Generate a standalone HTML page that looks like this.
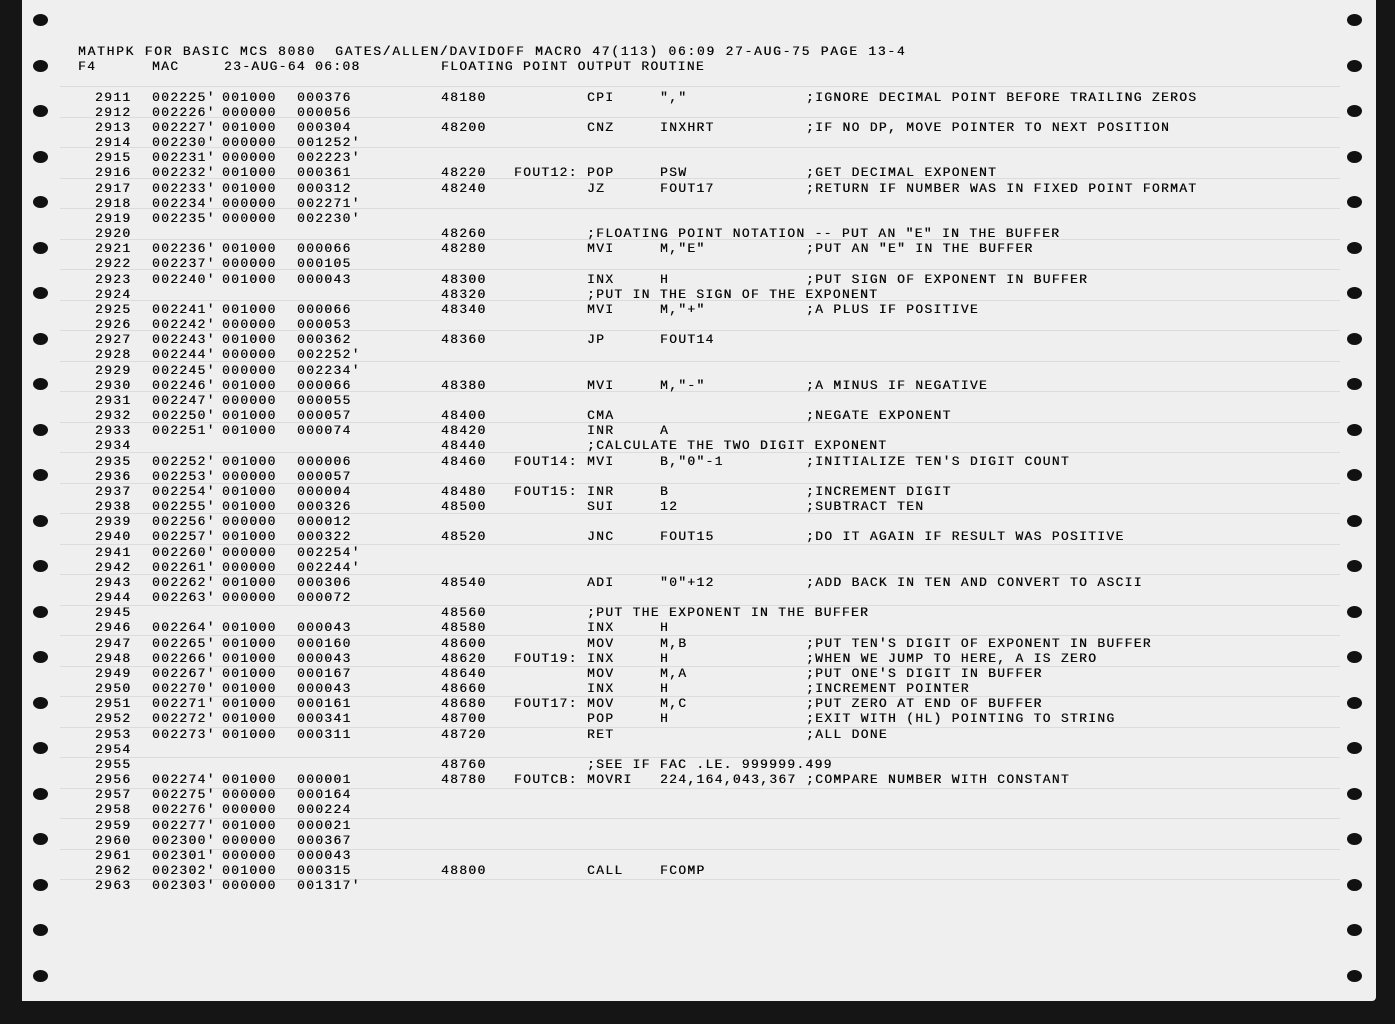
<!DOCTYPE html>
<html><head><meta charset="utf-8"><style>
html,body{margin:0;padding:0;background:#151515;}
#wrap{position:relative;width:1395px;height:1024px;overflow:hidden;background:#151515;}
#paper{position:absolute;left:22px;top:0;width:1354px;height:1001px;background:#efefef;border-radius:0 0 4px 0;}
.hole{position:absolute;width:15px;height:12px;border-radius:50%;background:#111;}
.rule{position:absolute;left:60px;width:1280px;height:1px;background:#dcdcdc;}
.t{position:absolute;font-family:"Liberation Mono",monospace;font-size:13px;letter-spacing:1.3px;color:#0a0a0a;white-space:pre;line-height:15px;text-shadow:0.3px 0 0 #0a0a0a;}
.h{letter-spacing:1.72px;}
</style></head><body><div id="wrap"><div id="paper"></div>
</div>
<script>
var w=document.getElementById('wrap');
function add(h){w.insertAdjacentHTML('beforeend',h);}
for(var k=0;k<22;k++){var y=20+45.5*k;add('<div class="hole" style="left:33px;top:'+(y-6)+'px"></div><div class="hole" style="left:1347px;top:'+(y-6)+'px"></div>');}
for(var k=0;k<27;k++){add('<div class="rule" style="top:'+(86+30.5*k)+'px"></div>');}
function t(x,y,s,c){add('<div class="t'+(c?' h':'')+'" style="left:'+x+'px;top:'+(y-7.5)+'px">'+s+'</div>');}
t(78,51,"MATHPK FOR BASIC MCS 8080  GATES/ALLEN/DAVIDOFF MACRO 47(113) 06:09 27-AUG-75 PAGE 13-4",1);
t(78,66,"F4");t(152,66,"MAC");t(224,66,"23-AUG-64 06:08");t(441,66,"FLOATING POINT OUTPUT ROUTINE");
var R=[
["2911","002225'","001000","000376","48180","","CPI","\",\"",";IGNORE DECIMAL POINT BEFORE TRAILING ZEROS"],
["2912","002226'","000000","000056"],
["2913","002227'","001000","000304","48200","","CNZ","INXHRT",";IF NO DP, MOVE POINTER TO NEXT POSITION"],
["2914","002230'","000000","001252'"],
["2915","002231'","000000","002223'"],
["2916","002232'","001000","000361","48220","FOUT12:","POP","PSW",";GET DECIMAL EXPONENT"],
["2917","002233'","001000","000312","48240","","JZ","FOUT17",";RETURN IF NUMBER WAS IN FIXED POINT FORMAT"],
["2918","002234'","000000","002271'"],
["2919","002235'","000000","002230'"],
["2920","","","","48260","",";FLOATING POINT NOTATION -- PUT AN \"E\" IN THE BUFFER"],
["2921","002236'","001000","000066","48280","","MVI","M,\"E\"",";PUT AN \"E\" IN THE BUFFER"],
["2922","002237'","000000","000105"],
["2923","002240'","001000","000043","48300","","INX","H",";PUT SIGN OF EXPONENT IN BUFFER"],
["2924","","","","48320","",";PUT IN THE SIGN OF THE EXPONENT"],
["2925","002241'","001000","000066","48340","","MVI","M,\"+\"",";A PLUS IF POSITIVE"],
["2926","002242'","000000","000053"],
["2927","002243'","001000","000362","48360","","JP","FOUT14"],
["2928","002244'","000000","002252'"],
["2929","002245'","000000","002234'"],
["2930","002246'","001000","000066","48380","","MVI","M,\"-\"",";A MINUS IF NEGATIVE"],
["2931","002247'","000000","000055"],
["2932","002250'","001000","000057","48400","","CMA","",";NEGATE EXPONENT"],
["2933","002251'","001000","000074","48420","","INR","A"],
["2934","","","","48440","",";CALCULATE THE TWO DIGIT EXPONENT"],
["2935","002252'","001000","000006","48460","FOUT14:","MVI","B,\"0\"-1",";INITIALIZE TEN'S DIGIT COUNT"],
["2936","002253'","000000","000057"],
["2937","002254'","001000","000004","48480","FOUT15:","INR","B",";INCREMENT DIGIT"],
["2938","002255'","001000","000326","48500","","SUI","12",";SUBTRACT TEN"],
["2939","002256'","000000","000012"],
["2940","002257'","001000","000322","48520","","JNC","FOUT15",";DO IT AGAIN IF RESULT WAS POSITIVE"],
["2941","002260'","000000","002254'"],
["2942","002261'","000000","002244'"],
["2943","002262'","001000","000306","48540","","ADI","\"0\"+12",";ADD BACK IN TEN AND CONVERT TO ASCII"],
["2944","002263'","000000","000072"],
["2945","","","","48560","",";PUT THE EXPONENT IN THE BUFFER"],
["2946","002264'","001000","000043","48580","","INX","H"],
["2947","002265'","001000","000160","48600","","MOV","M,B",";PUT TEN'S DIGIT OF EXPONENT IN BUFFER"],
["2948","002266'","001000","000043","48620","FOUT19:","INX","H",";WHEN WE JUMP TO HERE, A IS ZERO"],
["2949","002267'","001000","000167","48640","","MOV","M,A",";PUT ONE'S DIGIT IN BUFFER"],
["2950","002270'","001000","000043","48660","","INX","H",";INCREMENT POINTER"],
["2951","002271'","001000","000161","48680","FOUT17:","MOV","M,C",";PUT ZERO AT END OF BUFFER"],
["2952","002272'","001000","000341","48700","","POP","H",";EXIT WITH (HL) POINTING TO STRING"],
["2953","002273'","001000","000311","48720","","RET","",";ALL DONE"],
["2954"],
["2955","","","","48760","",";SEE IF FAC .LE. 999999.499"],
["2956","002274'","001000","000001","48780","FOUTCB:","MOVRI","224,164,043,367",";COMPARE NUMBER WITH CONSTANT"],
["2957","002275'","000000","000164"],
["2958","002276'","000000","000224"],
["2959","002277'","001000","000021"],
["2960","002300'","000000","000367"],
["2961","002301'","000000","000043"],
["2962","002302'","001000","000315","48800","","CALL","FCOMP"],
["2963","002303'","000000","001317'"]];
var X=[95,152,222,297,441,514,587,660,806];
R.forEach(function(r,i){var y=97+15.17*i;r.forEach(function(s,j){if(s){t(X[j],y,s.replace(/</g,'&lt;'));}});});
</script></body></html>
